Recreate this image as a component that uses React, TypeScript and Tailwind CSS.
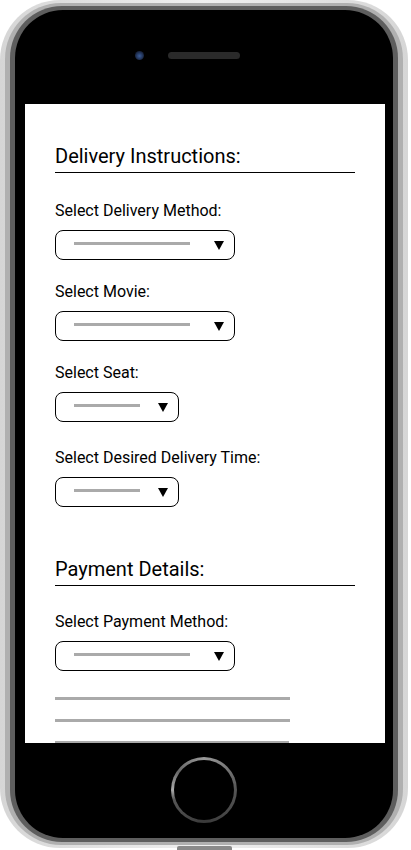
import React from 'react';

interface SelectProps {
  wide?: boolean;
}

function Caret() {
  return (
    <svg width="10" height="9" viewBox="0 0 10 9" className="shrink-0">
      <polygon points="0,0 10,0 5,9" fill="#000" />
    </svg>
  );
}

function FakeSelect({ wide = true }: SelectProps) {
  return (
    <div
      className={`mt-[10px] flex h-[30px] items-center justify-between rounded-[8px] border border-black pl-[18px] pr-[10px] ${
        wide ? 'w-[180px]' : 'w-[124px]'
      }`}
    >
      <div className={`mb-[3px] h-[3px] bg-[#aaaaaa] ${wide ? 'w-[116px]' : 'w-[66px]'}`} />
      <Caret />
    </div>
  );
}

function Field({ label, wide = true, className = '' }: { label: string; wide?: boolean; className?: string }) {
  return (
    <div className={className}>
      <div className="text-[16px] leading-[19px] text-black">{label}</div>
      <FakeSelect wide={wide} />
    </div>
  );
}

function SectionTitle({ children, className = '' }: { children: React.ReactNode; className?: string }) {
  return (
    <div className={`border-b border-black pb-[4px] text-[20px] leading-[24px] text-black ${className}`}>
      {children}
    </div>
  );
}

export default function App() {
  return (
    <div className="relative h-[850px] w-[411px] bg-white" style={{ fontFamily: 'Roboto, "Noto Sans", sans-serif' }}>
      {/* phone body - silver rings */}
      <div className="h-[848px] w-[408px] rounded-[60px] bg-[linear-gradient(90deg,#d6d6d6,#f0f0f0_50%,#d6d6d6)] px-[5px] py-[3px]">
        <div className="h-full w-full rounded-[56px] bg-[#b0b0b0] px-[5px] py-[3px]">
          <div className="h-full w-full rounded-[52px] bg-[#5e5e5e] px-[5px] py-[4px]">
            <div className="flex h-full w-full flex-col rounded-[48px] bg-black pl-[10px] pr-[8px]">
              {/* top bezel */}
              <div className="flex h-[94px] shrink-0 items-center pb-[3px] pl-[110px]">
                <div className="h-[9px] w-[9px] rounded-full bg-[radial-gradient(circle_at_50%_55%,#3b5d9a,#16213a_70%)]" />
                <div className="ml-[24px] h-[7px] w-[72px] rounded-full bg-[#2a2a2a]" />
              </div>

              {/* screen */}
              <div className="h-[639px] w-[360px] shrink-0 overflow-hidden bg-white px-[30px] pt-[40px]">
                <SectionTitle>Delivery Instructions:</SectionTitle>
                <Field className="mt-[28px]" label="Select Delivery Method:" />
                <Field className="mt-[22px]" label="Select Movie:" />
                <Field className="mt-[22px]" label="Select Seat:" wide={false} />
                <Field className="mt-[26px]" label="Select Desired Delivery Time:" wide={false} />

                <SectionTitle className="mt-[50px]">Payment Details:</SectionTitle>
                <Field className="mt-[26px]" label="Select Payment Method:" />

                <div className="mt-[26px] flex flex-col gap-[19px]">
                  <div className="h-[3px] w-[235px] bg-[#aaaaaa]" />
                  <div className="h-[3px] w-[235px] bg-[#aaaaaa]" />
                  <div className="h-[3px] w-[234px] bg-[#aaaaaa]" />
                </div>
              </div>

              {/* bottom bezel with home button */}
              <div className="flex flex-1 items-start justify-center pt-[14px]">
                <div className="ml-[-2px] h-[66px] w-[66px] rounded-full bg-[conic-gradient(#9a9a9a,#555_25%,#3a3a3a_50%,#555_70%,#aaaaaa_75%,#666_85%,#9a9a9a)] p-[3px]">
                  <div className="h-full w-full rounded-full bg-black" />
                </div>
              </div>
            </div>
          </div>
        </div>
      </div>
      {/* small bottom button edge */}
      <div className="absolute left-[177px] top-[846px] h-[4px] w-[55px] rounded-t-[2px] bg-[#8a8a8a]" />
    </div>
  );
}
